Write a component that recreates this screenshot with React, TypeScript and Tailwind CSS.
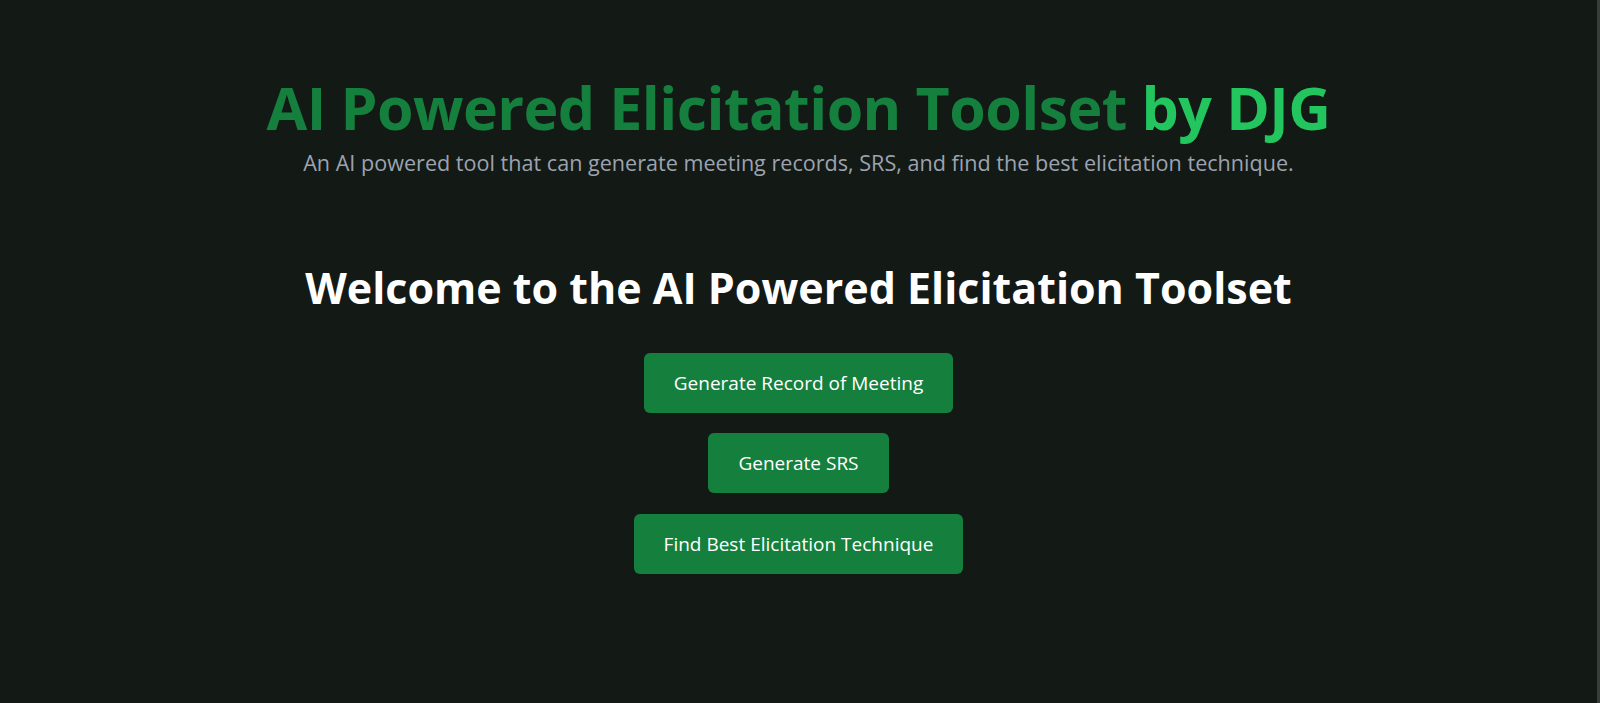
export default function App() {
  const actions = ['Generate Record of Meeting', 'Generate SRS', 'Find Best Elicitation Technique'];

  return (
    <div className="min-h-[703px] w-full bg-[#131915] flex font-['Open_Sans',sans-serif]">
      <main className="flex-1 flex flex-col items-center pt-[78px] text-center">
        <h1 className="text-[59px] font-bold leading-none tracking-[-0.55px] text-[#15803d]">
          AI Powered Elicitation Toolset <span className="text-[#22c55e]">by DJG</span>
        </h1>
        <p className="mt-[12px] text-[21.6px] leading-7 text-[#9ca3af]">
          An AI powered tool that can generate meeting records, SRS, and find the best elicitation technique.
        </p>

        <h2 className="mt-[84px] text-[43px] font-bold leading-tight text-white">
          Welcome to the AI Powered Elicitation Toolset
        </h2>

        <div className="mt-[38px] flex flex-col items-center gap-[20.5px]">
          {actions.map((label) => (
            <button
              key={label}
              className="h-[60px] px-[30px] rounded-md bg-[#15803d] text-[19px] text-white hover:bg-[#166534] transition"
            >
              {label}
            </button>
          ))}
        </div>
      </main>
      <div className="w-[3px] bg-[#3a3d3b]" />
    </div>
  );
}
